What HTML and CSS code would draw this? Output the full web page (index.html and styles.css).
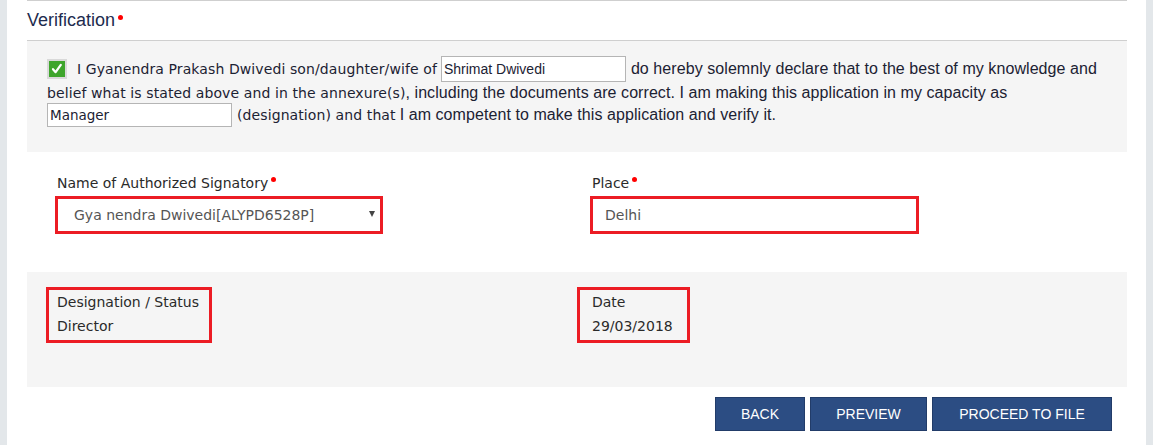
FILE: index.html
```html
<!DOCTYPE html>
<html>
<head>
<meta charset="utf-8">
<link rel="stylesheet" href="styles.css">
</head>
<body>
<div class="page">
  <div class="heading">
    <h2 class="title">Verification<span class="req"></span></h2>
  </div>
  <div class="decl">
    <div class="line line1">
      <span class="check"><svg width="20" height="20" viewBox="0 0 20 20"><rect x="0" y="0" width="20" height="20" fill="#d9d9d9"/><rect x="2" y="2" width="16" height="16" fill="#3ea52c"/><path d="M6 10.2 L8.6 13.2 L13.8 5.8" fill="none" stroke="#fff" stroke-width="2.2" stroke-linecap="round" stroke-linejoin="round"/></svg></span>
      <span class="v t1">I Gyanendra Prakash Dwivedi son/daughter/wife of</span>
      <span class="field f-name">Shrimat Dwivedi</span>
      <span class="n t2">do hereby solemnly declare that to the best of my knowledge and</span>
    </div>
    <div class="line line2">
      <span class="v">belief what is stated above and in the annexure(s)</span><span class="n">, including the documents are correct. I am making this application in my capacity as</span>
    </div>
    <div class="line line3">
      <span class="field f-desig">Manager</span>
      <span class="v t3">(designation) and that</span>
      <span class="n t4">I am competent to make this application and verify it.</span>
    </div>
  </div>
  <div class="row row-white">
    <div class="col">
      <div class="label">Name of Authorized Signatory<span class="req"></span></div>
      <div class="box select-box"><span>Gya nendra Dwivedi[ALYPD6528P]</span><span class="arrow"></span></div>
    </div>
    <div class="col">
      <div class="label">Place<span class="req"></span></div>
      <div class="box place-box"><span>Delhi</span></div>
    </div>
  </div>
  <div class="row row-gray">
    <div class="col2">
      <div class="info desig"><div>Designation / Status</div><div>Director</div></div>
    </div>
    <div class="col2">
      <div class="info date"><div>Date</div><div>29/03/2018</div></div>
    </div>
  </div>
  <div class="actions">
    <button class="btn b-back">BACK</button>
    <button class="btn b-prev">PREVIEW</button>
    <button class="btn b-file">PROCEED TO FILE</button>
  </div>
</div>
</body>
</html>
```
FILE: styles.css
```css
html, body { margin: 0; padding: 0; }
body {
  background: #e3e7ea;
  font-family: "DejaVu Sans", Verdana, sans-serif;
  font-size: 14px;
  color: #222;
}
.page {
  margin: 0 7px;
  background: #fff;
  height: 445px;
  padding: 0 19px 0 20px;
}
.heading {
  border-top: 1px solid #cfcfcf;
  padding: 9px 0 10px 0;
}
.title {
  margin: 0;
  font-family: "Liberation Sans", Arial, sans-serif;
  font-weight: normal;
  font-size: 18px;
  line-height: 20px;
  color: #1d2b4e;
  display: flex;
  align-items: flex-start;
}
.req {
  display: inline-block;
  width: 5px;
  height: 5px;
  border-radius: 50%;
  background: #f00;
  margin-left: 3px;
  margin-top: 4px;
}
.title .req { margin-top: 5px; margin-left: 3px; }

.decl {
  border-top: 1px solid #cfcfcf;
  background: #f5f5f5;
  padding: 15px 20px 25px 20px;
}
.line { display: flex; align-items: center; white-space: nowrap; }
.line1 { height: 26px; }
.line2 { height: 21px; }
.line3 { height: 24px; }
.check { display: flex; width: 20px; height: 20px; margin-right: 10px; }
.v { font-family: "DejaVu Sans", Verdana, sans-serif; font-size: 14px; letter-spacing: 0.1px; color: #1c2233; }
.n { font-family: "Liberation Sans", Arial, sans-serif; font-size: 16px; letter-spacing: 0.07px; color: #1c2233; }
.field {
  background: #fff;
  border: 1px solid #b5b5b5;
  box-sizing: border-box;
  display: flex;
  align-items: center;
  padding-left: 2px;
  color: #1c2233;
}
.f-name { width: 185px; height: 26px; margin-left: 4px; margin-right: 5px; font-family: "Liberation Sans", Arial, sans-serif; font-size: 14px; }
.f-desig { width: 185px; height: 24px; margin-right: 5px; font-family: "DejaVu Sans", Verdana, sans-serif; font-size: 13.5px; }
.t4 { margin-left: 4px; }

.row { display: grid; grid-template-columns: 535px 535px; padding: 0 15px; }
.row-white { height: 120px; box-sizing: border-box; padding-top: 22px; }
.col { padding-left: 13px; }
.label {
  padding-left: 2px;
  line-height: 18px;
  height: 18px;
  color: #2a2a2a;
  display: flex;
  align-items: flex-start;
  margin-bottom: 4px;
}
.label .req { margin-top: 3px; margin-left: 3px; }
.box {
  border: 3px solid #ec1c24;
  height: 38px;
  box-sizing: border-box;
  display: flex;
  align-items: center;
  background: #fff;
  color: #555;
}
.select-box { width: 328px; padding-left: 16px; justify-content: space-between; padding-right: 5px; }
.place-box { width: 329px; padding-left: 12px; }
.arrow {
  width: 0; height: 0;
  border-left: 3.5px solid transparent;
  border-right: 3.5px solid transparent;
  border-top: 6px solid #444;
  margin-top: -3px;
}

.row-gray { background: #f5f5f5; height: 115px; box-sizing: border-box; padding-top: 15px; }
.info {
  border: 3px solid #ec1c24;
  box-sizing: border-box;
  height: 56px;
  line-height: 24px;
  color: #2a2a2a;
}
.desig { width: 166px; margin-left: 4px; padding-left: 8px; }
.date { width: 113px; padding-left: 12px; }

.actions {
  display: flex;
  justify-content: flex-end;
  gap: 5px;
  padding: 10px 15px 0 0;
}
.btn {
  height: 34px;
  background: #2c4d83;
  border: 1px solid #223c69;
  color: #fff;
  font-family: "Liberation Sans", Arial, sans-serif;
  font-size: 14px;
  padding: 0;
  margin: 0;
}
.b-back { width: 90px; }
.b-prev { width: 117px; }
.b-file { width: 180px; }
```
